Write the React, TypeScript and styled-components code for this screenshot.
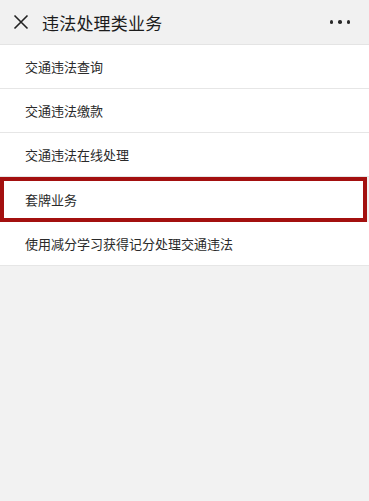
import React from "react";
import styled, { createGlobalStyle } from "styled-components";

const GlobalStyle = createGlobalStyle`
  html, body {
    margin: 0;
    padding: 0;
    background: #f2f2f2;
    font-family: "Noto Sans CJK SC", "Noto Sans", sans-serif;
  }
`;

const Page = styled.div`
  width: 369px;
  min-height: 501px;
  background: #f2f2f2;
`;

const Header = styled.div`
  height: 45px;
  display: flex;
  align-items: center;
  padding: 0 12px 0 11px;
  background: #f1f1f1;
  border-bottom: 1px solid #e4e4e4;
  box-sizing: border-box;
`;

const Close = styled.button`
  width: 20px;
  height: 20px;
  padding: 0;
  border: none;
  background: none;
  display: flex;
  align-items: center;
  justify-content: center;
`;

const Title = styled.div`
  flex: 1;
  margin-left: 11px;
  font-size: 17px;
  color: #1c1c1c;
  letter-spacing: 0.2px;
`;

const More = styled.div`
  display: flex;
  gap: 5px;
  margin-right: 7px;
`;

const Dot = styled.span`
  width: 3.5px;
  height: 3.5px;
  border-radius: 50%;
  background: #2a2a2a;
`;

const List = styled.ul`
  margin: 0;
  padding: 0;
  list-style: none;
`;

interface RowProps {
  readonly $marked?: boolean;
}

const Row = styled.li<RowProps>`
  height: 44px;
  box-sizing: border-box;
  display: flex;
  align-items: center;
  padding-left: 25px;
  background: #fff;
  border-bottom: 1px solid #e6e6e6;
  font-size: 13px;
  color: #2a2a2a;
  ${(p) =>
    p.$marked &&
    `
    margin-right: 2px;
    padding-left: 21px;
    border: 4px solid #a3100f;
    height: 45px;
  `}
`;

const items = [
  "交通违法查询",
  "交通违法缴款",
  "交通违法在线处理",
  "套牌业务",
  "使用减分学习获得记分处理交通违法",
];

export default function App() {
  return (
    <Page>
      <GlobalStyle />
      <Header>
        <Close aria-label="关闭">
          <svg width="16" height="16" viewBox="0 0 16 16">
            <path d="M1.5 1.5 L14.5 14.5 M14.5 1.5 L1.5 14.5" stroke="#222" strokeWidth="1.6" fill="none" />
          </svg>
        </Close>
        <Title>违法处理类业务</Title>
        <More>
          <Dot />
          <Dot />
          <Dot />
        </More>
      </Header>
      <List>
        {items.map((t) => (
          <Row key={t} $marked={t === "套牌业务"}>
            {t}
          </Row>
        ))}
      </List>
    </Page>
  );
}
